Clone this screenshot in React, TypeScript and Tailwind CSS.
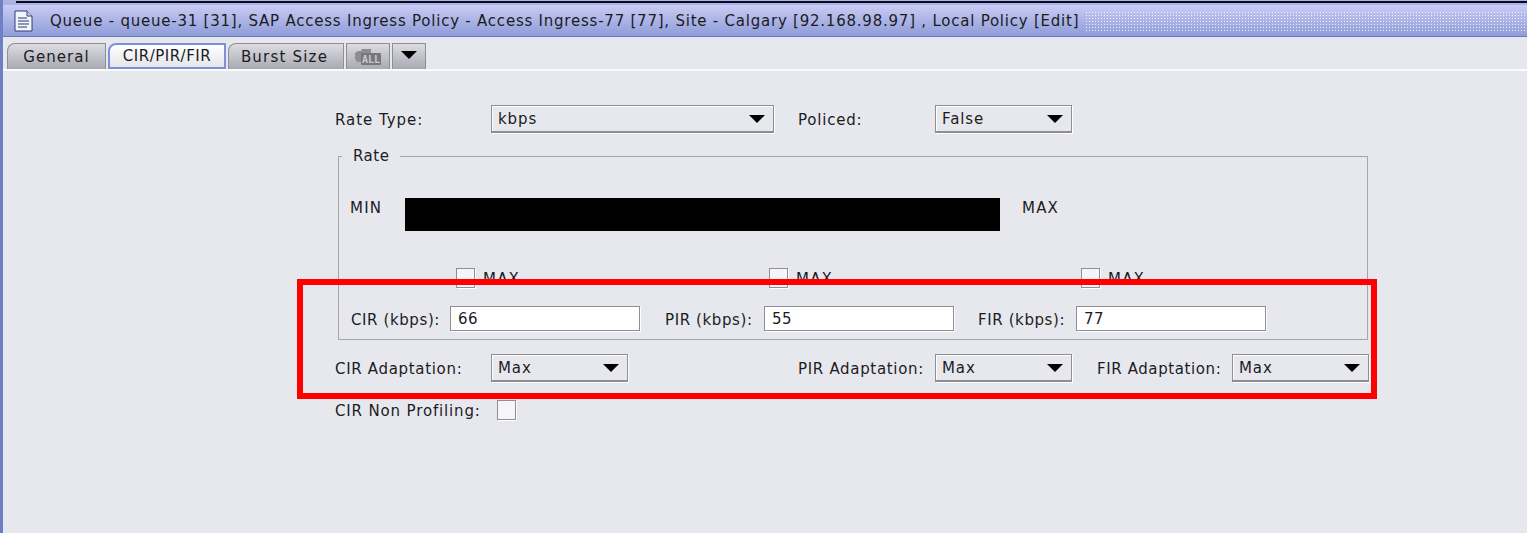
const font = "font-['DejaVu_Sans',sans-serif] text-[15px] leading-[18px] text-[#1c1c1f]"

function Caret() {
  return (
    <svg width="16" height="8" viewBox="0 0 16 8" className="shrink-0">
      <path d="M0 0H16L8 8Z" fill="#000" />
    </svg>
  )
}

function Select({ value, className }: { value: string; className: string }) {
  return (
    <div
      className={`flex h-[28px] shrink-0 items-center justify-between border border-[#8e8e94] border-b-2 shadow-[1px_1px_0_#fff,inset_1px_1px_0_#fff] pl-[6px] pr-[8px] ${className}`}
    >
      <span className="tracking-[0.9px]">{value}</span>
      <Caret />
    </div>
  )
}

function Check({ className = '' }: { className?: string }) {
  return (
    <div
      className={`h-[20px] w-[19px] shrink-0 border border-[#8e8e94] bg-[#f6f6f8] shadow-[1px_1px_0_#fff] ${className}`}
    />
  )
}

function Label({ text, className }: { text: string; className: string }) {
  return <span className={`shrink-0 pt-[2px] ${className}`}>{text}</span>
}

function RateInput({
  label,
  value,
  className,
  labelWidth,
}: {
  label: string
  value: string
  className: string
  labelWidth: string
}) {
  return (
    <div className={`flex items-center ${className}`}>
      <span className={`shrink-0 pl-[1px] pt-[2px] tracking-[0.6px] ${labelWidth}`}>{label}</span>
      <div className="flex h-[25px] w-[190px] items-center border border-[#8e8e94] bg-white pl-[7px] tracking-[0.5px] shadow-[1px_1px_0_#fff]">
        {value}
      </div>
    </div>
  )
}

function CheckMax({ className }: { className: string }) {
  return (
    <div className={`flex items-center gap-[8px] ${className}`}>
      <Check />
      <span className="pt-[2px] tracking-[1.2px]">MAX</span>
    </div>
  )
}

function Tab({
  label,
  active,
  className,
}: {
  label: string
  active?: boolean
  className: string
}) {
  return (
    <div
      className={`flex h-[26px] items-center justify-center rounded-tl-[8px] border border-b-0 ${
        active
          ? 'border-[#7f8fd6] border-2 border-b-2 bg-gradient-to-b from-[#ffffff] to-[#e4e5ea]'
          : 'border-[#8e8e94] bg-gradient-to-b from-[#dcdce2] to-[#a9a9b2]'
      } ${className}`}
    >
      {label}
    </div>
  )
}

export default function App() {
  return (
    <div className={`relative flex h-[533px] w-[1527px] overflow-hidden bg-[#e7e8ee] ${font}`}>
      <div className="w-[3px] shrink-0 bg-[#6f7fc4]" />
      <div className="flex min-w-0 flex-1 flex-col">
        {/* window title */}
        <div className="h-[5px] shrink-0 bg-[#aab3e2] pl-[13px] pt-[1px]">
          <div className="h-[2px] bg-[#0b0b20]" />
        </div>
        <div className="flex h-[32px] shrink-0 items-center border-b border-[#6877bd] bg-gradient-to-b from-[#c9ccf3] to-[#8f9cd8] pl-[11px]">
          <svg width="19" height="22" viewBox="0 0 19 22" className="shrink-0">
            <path d="M1 1H13L18 6V21H1Z" fill="#f4f5fb" stroke="#2c3f7f" />
            <path d="M13 1V6H18" fill="#cfd6ee" stroke="#2c3f7f" />
            <path d="M4 8H13M4 11H15M4 14H15M4 17H13" stroke="#26366f" strokeWidth="1.2" />
          </svg>
          <span className="ml-[17px] shrink-0 whitespace-nowrap tracking-[0.77px]">
            Queue - queue-31 [31], SAP Access Ingress Policy - Access Ingress-77 [77], Site - Calgary [92.168.98.97] , Local Policy [Edit]
          </span>
          <div className="ml-[6px] h-[20px] flex-1 bg-[radial-gradient(#eef0fb_1px,transparent_1px)] bg-[length:3px_3px]" />
        </div>

        {/* tabs */}
        <div className="flex h-[34px] shrink-0 items-end gap-[2px] border-b-2 border-[#fbfbfd] pl-[4px]">
          <Tab label="General" className="w-[99px] tracking-[1.05px]" />
          <Tab label="CIR/PIR/FIR" active className="w-[118px] tracking-[0.5px]" />
          <Tab label="Burst Size" className="w-[116px] pr-[3px] tracking-[1.2px]" />
          <div className="flex h-[26px] w-[44px] items-center justify-center border border-b-0 border-[#8e8e94] bg-gradient-to-b from-[#dcdce2] to-[#a9a9b2]">
            <svg width="30" height="20" viewBox="0 0 30 20">
              <path d="M2 12V6L5 4H8L9 2H18V7H8V15H4Z" fill="#8d8d92" />
              <rect x="8" y="6" width="20" height="12" rx="1" fill="#77777c" />
              <text x="18" y="16" textAnchor="middle" fontSize="10" fontWeight="700" fill="#c9c9ce" fontFamily="'DejaVu Sans Mono', monospace">ALL</text>
            </svg>
          </div>
          <div className="flex h-[26px] w-[34px] items-center justify-center border border-b-0 border-[#8e8e94] bg-gradient-to-b from-[#dcdce2] to-[#a9a9b2] pb-[4px]">
            <Caret />
          </div>
        </div>

        {/* form */}
        <div className="ml-[332px] flex w-[1040px] flex-col pt-[34px]">
          <div className="flex items-center">
            <Label text="Rate Type:" className="w-[156px] tracking-[0.95px]" />
            <Select value="kbps" className="w-[283px]" />
            <Label text="Policed:" className="ml-[24px] w-[137px] tracking-[0.8px]" />
            <Select value="False" className="w-[137px]" />
          </div>

          <fieldset className="ml-[3px] mt-[14px] h-[193px] w-[1030px] border border-[#a5a5ab] pl-[11px]">
            <legend className="-ml-[8px] px-[11px] tracking-[0.5px]">Rate</legend>
            <div className="mt-[33px] flex items-start">
              <span className="mt-[1px] w-[55px] shrink-0 tracking-[1.2px]">MIN</span>
              <div className="h-[33px] w-[595px] bg-black" />
              <span className="ml-[22px] mt-[1px] tracking-[1.2px]">MAX</span>
            </div>
            <div className="mt-[37px] flex">
              <CheckMax className="ml-[106px] w-[313px]" />
              <CheckMax className="w-[312px]" />
              <CheckMax className="" />
            </div>
            <div className="mt-[18px] flex">
              <RateInput label="CIR (kbps):" value="66" labelWidth="w-[100px]" className="w-[314px]" />
              <RateInput label="PIR (kbps):" value="55" labelWidth="w-[100px]" className="w-[313px]" />
              <RateInput label="FIR (kbps):" value="77" labelWidth="w-[99px]" className="" />
            </div>
          </fieldset>

          <div className="mt-[14px] flex items-center">
            <Label text="CIR Adaptation:" className="w-[156px] tracking-[0.68px]" />
            <Select value="Max" className="w-[137px]" />
            <Label text="PIR Adaptation:" className="ml-[170px] w-[137px] tracking-[0.68px]" />
            <Select value="Max" className="w-[137px]" />
            <Label text="FIR Adaptation:" className="ml-[25px] w-[135px] tracking-[0.6px]" />
            <Select value="Max" className="w-[137px]" />
          </div>

          <div className="mt-[18px] flex items-center">
            <Label text="CIR Non Profiling:" className="w-[162px] tracking-[0.85px]" />
            <Check />
          </div>
        </div>
      </div>

      {/* annotation drawn over the screenshot */}
      <div className="pointer-events-none absolute left-[297px] top-[279px] h-[120px] w-[1080px] border-[6px] border-[#fe0000]" />
    </div>
  )
}
